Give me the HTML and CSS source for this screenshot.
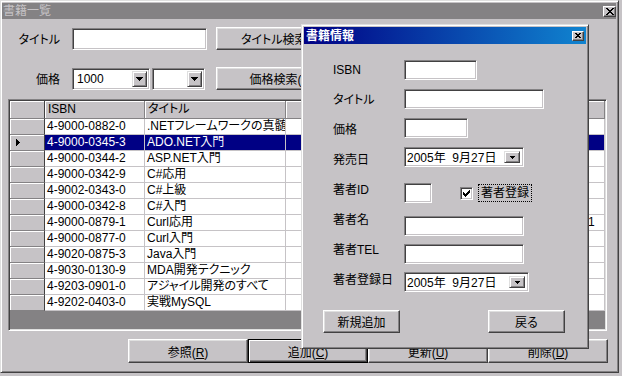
FILE: index.html
```html
<!DOCTYPE html>
<html lang="ja">
<head>
    <meta charset="UTF-8">
    <title>書籍一覧</title>
    <link rel="stylesheet" href="styles.css">
</head>
<body>
    <div class="window">
        <div class="caption">
            <span class="caption-text">書籍一覧</span>
            <span class="close-btn close-main">
                <svg width="8" height="7" viewBox="0 0 8 7"><path d="M0 0h2v1H0zM6 0h2v1H6zM1 1h2v1H1zM5 1h2v1H5zM2 2h4v1H2zM3 3h2v1H3zM2 4h4v1H2zM1 5h2v1H1zM5 5h2v1H5zM0 6h2v1H0zM6 6h2v1H6z"/></svg>
            </span>
        </div>

        <div class="search-row first">
            <span class="search-label">タイトル</span>
            <div class="textbox title-box"></div>
            <button class="btn search-btn">タイトル検索(<u>T</u>)</button>
        </div>

        <div class="search-row">
            <span class="search-label">価格</span>
            <div class="textbox combo combo-price">
                <span class="combo-text">1000</span>
                <span class="drop-btn"><svg width="7" height="4" viewBox="0 0 7 4"><path d="M0 0h7v1H0zM1 1h5v1H1zM2 2h3v1H2zM3 3h1v1H3z"/></svg></span>
            </div>
            <div class="textbox combo combo-op">
                <span class="combo-text"></span>
                <span class="drop-btn"><svg width="7" height="4" viewBox="0 0 7 4"><path d="M0 0h7v1H0zM1 1h5v1H1zM2 2h3v1H2zM3 3h1v1H3z"/></svg></span>
            </div>
            <button class="btn search-btn price-btn">価格検索(<u>P</u>)</button>
        </div>

        <div class="grid">
            <div class="grid-row grid-head">
                <div class="row-head"></div>
                <div class="cell">ISBN</div>
                <div class="cell">タイトル</div>
                <div class="cell"></div>
                <div class="cell"></div>
            </div>
            <div class="grid-row">
                <div class="row-head"></div>
                <div class="cell">4-9000-0882-0</div>
                <div class="cell">.NETフレームワークの真髄</div>
                <div class="cell"></div>
                <div class="cell"></div>
            </div>
            <div class="grid-row selected">
                <div class="row-head"><svg width="4" height="7" viewBox="0 0 4 7"><path d="M0 0h1v7H0zM1 1h1v5H1zM2 2h1v3H2zM3 3h1v1H3z"/></svg></div>
                <div class="cell">4-9000-0345-3</div>
                <div class="cell">ADO.NET入門</div>
                <div class="cell"></div>
                <div class="cell"></div>
            </div>
            <div class="grid-row">
                <div class="row-head"></div>
                <div class="cell">4-9000-0344-2</div>
                <div class="cell">ASP.NET入門</div>
                <div class="cell"></div>
                <div class="cell"></div>
            </div>
            <div class="grid-row">
                <div class="row-head"></div>
                <div class="cell">4-9000-0342-9</div>
                <div class="cell">C#応用</div>
                <div class="cell"></div>
                <div class="cell"></div>
            </div>
            <div class="grid-row">
                <div class="row-head"></div>
                <div class="cell">4-9002-0343-0</div>
                <div class="cell">C#上級</div>
                <div class="cell"></div>
                <div class="cell"></div>
            </div>
            <div class="grid-row">
                <div class="row-head"></div>
                <div class="cell">4-9000-0342-8</div>
                <div class="cell">C#入門</div>
                <div class="cell"></div>
                <div class="cell"></div>
            </div>
            <div class="grid-row">
                <div class="row-head"></div>
                <div class="cell">4-9000-0879-1</div>
                <div class="cell">Curl応用</div>
                <div class="cell"></div>
                <div class="cell">1</div>
            </div>
            <div class="grid-row">
                <div class="row-head"></div>
                <div class="cell">4-9000-0877-0</div>
                <div class="cell">Curl入門</div>
                <div class="cell"></div>
                <div class="cell"></div>
            </div>
            <div class="grid-row">
                <div class="row-head"></div>
                <div class="cell">4-9020-0875-3</div>
                <div class="cell">Java入門</div>
                <div class="cell"></div>
                <div class="cell"></div>
            </div>
            <div class="grid-row">
                <div class="row-head"></div>
                <div class="cell">4-9030-0130-9</div>
                <div class="cell">MDA開発テクニック</div>
                <div class="cell"></div>
                <div class="cell"></div>
            </div>
            <div class="grid-row">
                <div class="row-head"></div>
                <div class="cell">4-9203-0901-0</div>
                <div class="cell">アジャイル開発のすべて</div>
                <div class="cell"></div>
                <div class="cell"></div>
            </div>
            <div class="grid-row">
                <div class="row-head"></div>
                <div class="cell">4-9202-0403-0</div>
                <div class="cell">実戦MySQL</div>
                <div class="cell"></div>
                <div class="cell"></div>
            </div>
        </div>

        <div class="actions">
            <button class="btn action-btn">参照(<u>R</u>)</button>
            <button class="btn action-btn btn-default">追加(<u>C</u>)</button>
            <button class="btn action-btn">更新(<u>U</u>)</button>
            <button class="btn action-btn">削除(<u>D</u>)</button>
        </div>
    </div>

    <div class="dialog">
        <div class="caption caption-active">
            <span class="caption-text">書籍情報</span>
            <span class="close-btn close-dialog">
                <svg width="6" height="5" viewBox="0 0 6 5"><path d="M0 0h2v1H0zM4 0h2v1H4zM1 1h4v1H1zM2 2h2v1H2zM1 3h4v1H1zM0 4h2v1H0zM4 4h2v1H4z"/></svg>
            </span>
        </div>

        <div class="form">
            <div class="labels">
                <span>ISBN</span>
                <span>タイトル</span>
                <span>価格</span>
                <span>発売日</span>
                <span>著者ID</span>
                <span>著者名</span>
                <span>著者TEL</span>
                <span>著者登録日</span>
            </div>
            <div class="controls">
                <div class="textbox field w-isbn"></div>
                <div class="textbox field w-title"></div>
                <div class="textbox field w-price"></div>
                <div class="textbox field combo w-date">
                    <span class="combo-text">2005年&nbsp;&nbsp;9月27日</span>
                    <span class="drop-btn date-btn"><svg width="5" height="3" viewBox="0 0 5 3"><path d="M0 0h5v1H0zM1 1h3v1H1zM2 2h1v1H2z"/></svg></span>
                </div>
                <div class="ctl-row sep">
                    <div class="textbox field w-id"></div>
                    <span class="checkbox">
                        <svg width="7" height="7" viewBox="0 0 7 7"><path d="M6 0h1v1H6zM5 1h2v1H5zM0 2h1v1H0zM4 2h3v1H4zM0 3h2v1H0zM3 3h3v1H3zM0 4h5v1H0zM1 5h3v1H1zM2 6h1v1H2z"/></svg>
                    </span>
                    <span class="check-label">著者登録</span>
                </div>
                <div class="textbox field w-name sep-sm"></div>
                <div class="textbox field w-name tight"></div>
                <div class="textbox field combo w-date2 tight">
                    <span class="combo-text">2005年&nbsp;&nbsp;9月27日</span>
                    <span class="drop-btn date-btn"><svg width="5" height="3" viewBox="0 0 5 3"><path d="M0 0h5v1H0zM1 1h3v1H1zM2 2h1v1H2z"/></svg></span>
                </div>
            </div>
        </div>

        <div class="dialog-actions">
            <button class="btn dialog-btn">新規追加</button>
            <button class="btn dialog-btn">戻る</button>
        </div>
    </div>
</body>
</html>
```

FILE: styles.css
```css
body {
    margin: 0;
    width: 622px;
    height: 376px;
    position: relative;
    overflow: hidden;
    background: #c6c3c6;
    font-family: "Liberation Sans", "Noto Sans CJK JP", sans-serif;
    font-size: 12px;
    font-feature-settings: "palt";
    color: #000;
}

/* window frame */
.window {
    box-sizing: border-box;
    width: 619px;
    height: 373px;
    border: 1px solid;
    border-color: #dfdfdf #424142 #424142 #dfdfdf;
    box-shadow: inset 1px 1px #fff, inset -1px -1px #848284;
    padding: 2px 2px 2px 1px;
}

.caption {
    display: flex;
    align-items: center;
    justify-content: space-between;
    height: 16px;
    background: #848284;
    color: #c6c3c6;
    line-height: 16px;
}

.caption-text {
    padding-left: 1px;
}

.close-btn {
    box-sizing: border-box;
    display: flex;
    align-items: center;
    justify-content: center;
    background: #c6c3c6;
    border: 1px solid;
    border-color: #fff #424142 #424142 #fff;
    box-shadow: inset -1px -1px #848284;
}

.close-main {
    width: 13px;
    height: 11px;
    margin-right: 0;
}

/* search area */
.search-row {
    display: flex;
    align-items: center;
    height: 23px;
    margin-top: 17px;
}

.search-row.first {
    margin-top: 8px;
}

.search-label {
    box-sizing: border-box;
    width: 70px;
    padding-right: 12px;
    text-align: right;
}

.textbox {
    box-sizing: border-box;
    background: #fff;
    border: 1px solid;
    border-color: #848284 #fff #fff #848284;
    box-shadow: inset 1px 1px #424142, inset -1px -1px #c6c3c6;
}

.title-box {
    width: 135px;
    height: 22px;
}

.combo {
    display: flex;
    align-items: stretch;
    padding: 2px;
}

.combo-text {
    flex: 1;
    padding-left: 2px;
    line-height: 17px;
}

.combo-price {
    width: 78px;
    height: 22px;
}

.combo-op {
    width: 53px;
    height: 22px;
    margin-left: 2px;
}

.drop-btn {
    box-sizing: border-box;
    width: 15px;
    display: flex;
    align-items: center;
    justify-content: center;
    background: #c6c3c6;
    border: 1px solid;
    border-color: #dfdfdf #424142 #424142 #dfdfdf;
    box-shadow: inset 1px 1px #fff, inset -1px -1px #848284;
}

.btn {
    box-sizing: border-box;
    padding: 0;
    background: #c6c3c6;
    border: 1px solid;
    border-color: #fff #424142 #424142 #fff;
    box-shadow: inset -1px -1px #848284, inset 1px 1px #dfdfdf;
    font: inherit;
    color: #000;
}

.btn u {
    text-underline-offset: 1px;
}

.search-btn {
    width: 131px;
    height: 23px;
    margin-left: 9px;
}

.price-btn {
    margin-left: 11px;
}

/* data grid */
.grid {
    box-sizing: border-box;
    width: 599px;
    height: 232px;
    margin: 9px 0 0 6px;
    padding: 1px;
    border: 1px solid;
    border-color: #848284 #fff #fff #848284;
    box-shadow: inset 1px 1px #424142, inset -1px -1px #dfdfdf;
    background: #848284;
    overflow: hidden;
}

.grid-row {
    display: grid;
    grid-template-columns: 35px 100px 141px 300px 1fr;
    height: 16px;
    line-height: 15px;
}

.grid-row > div {
    box-sizing: border-box;
    border-right: 1px solid #c6c3c6;
    border-bottom: 1px solid #c6c3c6;
    white-space: nowrap;
    overflow: hidden;
}

.cell {
    background: #fff;
    padding-left: 2px;
}

.row-head {
    display: flex;
    align-items: center;
    padding-left: 6px;
    background: #c6c3c6;
    box-shadow: inset 1px 1px #fff;
}

.grid-row > .row-head {
    border-right-color: #424142;
    border-bottom-color: #848284;
}

.grid-head {
    height: 18px;
    line-height: 17px;
}

.grid-head > .cell {
    background: #c6c3c6;
    padding-left: 3px;
    box-shadow: inset 1px 1px #fff;
    border-right-color: #848284;
    border-bottom-color: #848284;
}

.selected > .cell {
    background: #000084;
    color: #fff;
}

/* bottom buttons */
.actions {
    display: flex;
    margin: 8px 0 0 126px;
}

.action-btn {
    width: 120px;
    height: 24px;
}

.btn-default {
    border-color: #000;
    box-shadow: inset 1px 1px #fff, inset -1px -1px #424142, inset -2px -2px #848284;
}

/* dialog */
.dialog {
    position: absolute;
    left: 301px;
    top: 24px;
    box-sizing: border-box;
    width: 288px;
    height: 325px;
    padding: 2px;
    border: 1px solid;
    border-color: #dfdfdf #424142 #424142 #dfdfdf;
    box-shadow: inset 1px 1px #fff, inset -1px -1px #848284;
    background: #c6c3c6;
}

.caption-active {
    height: 17px;
    background: linear-gradient(to right, #000084, #1084d0);
    color: #fff;
    font-weight: bold;
}

.caption-active .caption-text {
    padding-left: 2px;
}

.close-dialog {
    width: 12px;
    height: 10px;
    margin-right: 2px;
}

.form {
    display: flex;
    align-items: flex-start;
    padding-left: 29px;
}

.labels {
    display: flex;
    flex-direction: column;
    gap: 16px;
    width: 71px;
    margin-top: 19px;
    line-height: 14px;
}

.controls {
    display: flex;
    flex-direction: column;
    align-items: flex-start;
    gap: 9px;
    margin-top: 16px;
}

.field {
    height: 20px;
}

.w-isbn { width: 73px; }
.w-title { width: 140px; }
.w-price { width: 64px; }
.w-date { width: 120px; }
.w-id { width: 28px; }
.w-name { width: 120px; }
.w-date2 { width: 125px; }

.combo.field .combo-text {
    padding-left: 0;
    line-height: 16px;
}

.date-btn {
    width: 16px;
    margin: 1px 1px 1px 0;
}

.ctl-row {
    display: flex;
    align-items: center;
}

.sep { margin-top: 7px; }
.sep-sm { margin-top: 4px; }
.tight { margin-top: -1px; }

.checkbox {
    box-sizing: border-box;
    width: 13px;
    height: 13px;
    margin-left: 28px;
    padding: 2px;
    display: flex;
    align-items: center;
    justify-content: center;
    background: #fff;
    border: 1px solid;
    border-color: #848284 #fff #fff #848284;
    box-shadow: inset 1px 1px #424142, inset -1px -1px #c6c3c6;
}

.check-label {
    margin-left: 5px;
    padding: 0 2px;
    line-height: 16px;
    border: 1px dotted #000;
}

.dialog-actions {
    display: flex;
    gap: 88px;
    margin: 18px 0 0 19px;
}

.dialog-btn {
    width: 77px;
    height: 23px;
}
```
